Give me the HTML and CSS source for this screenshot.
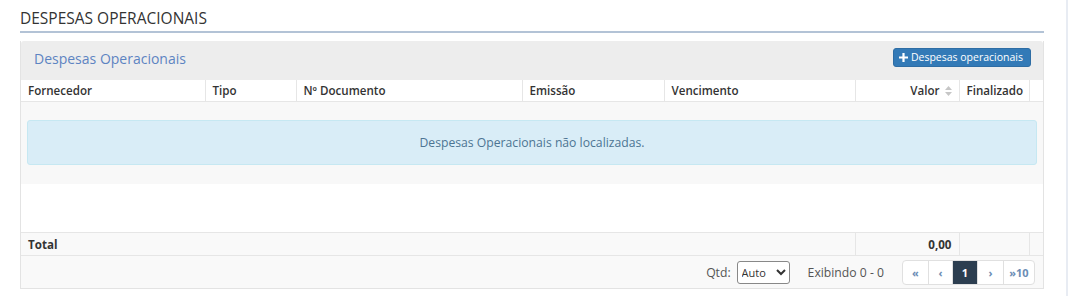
FILE: index.html
```html
<!DOCTYPE html>
<html lang="pt-BR">
<head>
    <meta charset="UTF-8">
    <meta name="viewport" content="width=device-width, initial-scale=1.0">
    <title>Despesas Operacionais</title>
    <link rel="stylesheet" href="styles.css">
</head>
<body>
    <div class="page">
        <h1 class="page-title">DESPESAS OPERACIONAIS</h1>

        <div class="panel">
            <div class="panel-heading">
                <span class="panel-title">Despesas Operacionais</span>
                <button class="btn-add" type="button">
                    <svg class="plus" width="9" height="9" viewBox="0 0 9 9"><path d="M3.4 0h2.2v3.4H9v2.2H5.6V9H3.4V5.6H0V3.4h3.4z" fill="#fff"/></svg>
                    Despesas operacionais
                </button>
            </div>

            <table class="grid">
                <colgroup>
                    <col style="width:184px">
                    <col style="width:91px">
                    <col style="width:226px">
                    <col style="width:142px">
                    <col style="width:191px">
                    <col style="width:104px">
                    <col style="width:70px">
                    <col style="width:14px">
                </colgroup>
                <thead>
                    <tr>
                        <th>Fornecedor</th>
                        <th>Tipo</th>
                        <th>Nº Documento</th>
                        <th>Emissão</th>
                        <th>Vencimento</th>
                        <th class="num">Valor <svg class="sort" width="7" height="10" viewBox="0 0 7 10"><path d="M3.5 0L7 4H0z M3.5 10L0 6h7z" fill="#c6c6c6"/></svg></th>
                        <th>Finalizado</th>
                        <th></th>
                    </tr>
                </thead>
            </table>

            <div class="grid-body">
                <div class="empty-area">
                    <div class="alert-info">Despesas Operacionais não localizadas.</div>
                </div>
            </div>

            <table class="grid grid-foot">
                <colgroup>
                    <col style="width:834px">
                    <col style="width:104px">
                    <col style="width:70px">
                    <col style="width:14px">
                </colgroup>
                <tr>
                    <td>Total</td>
                    <td class="num">0,00</td>
                    <td></td>
                    <td></td>
                </tr>
            </table>

            <div class="pager-bar">
                <label class="qtd">Qtd:
                    <select>
                        <option>Auto</option>
                    </select>
                </label>
                <span class="showing">Exibindo 0 - 0</span>
                <ul class="pagination">
                    <li class="w26">&laquo;</li>
                    <li class="w24">&lsaquo;</li>
                    <li class="active w25">1</li>
                    <li class="w26">&rsaquo;</li>
                    <li class="w31">&raquo;10</li>
                </ul>
            </div>
        </div>
    </div>
</body>
</html>
```

FILE: styles.css
```css
html, body {
    margin: 0;
    padding: 0;
    background-color: #fff;
}
body {
    font-family: "Open Sans", Arial, sans-serif;
    color: #333;
    height: 296px;
    overflow: hidden;
}
.page {
    width: 1024px;
    padding: 0 22px 0 20px;
    border-right: 2px solid #e8ecf3;
    height: 296px;
}
.page-title {
    margin: 0;
    padding: 8px 0 3px;
    font-size: 15.5px;
    font-weight: 400;
    line-height: 20px;
    color: #333;
    border-bottom: 2px solid #b3c3d6;
}
.panel {
    margin-top: 8px;
    border: 1px solid #e3e3e3;
    border-top: none;
    background-color: #fff;
}
.panel-heading {
    display: flex;
    justify-content: space-between;
    align-items: center;
    height: 39px;
    padding: 0 12px 0 13px;
    background-color: #ededed;
    border-radius: 3px 3px 0 0;
}
.panel-title {
    font-size: 14px;
    color: #5d84c2;
    margin-top: -4px;
}
.btn-add {
    display: flex;
    align-items: center;
    height: 19px;
    margin-top: -7px;
    padding: 0 7px 0 5px;
    border: 1px solid #2e6da4;
    border-radius: 3px;
    background-color: #337ab7;
    color: #fff;
    font-family: "Open Sans", Arial, sans-serif;
    font-size: 10.5px;
    cursor: pointer;
}
.plus {
    margin-right: 3px;
}
.grid {
    width: 100%;
    border-collapse: collapse;
    table-layout: fixed;
    font-size: 11.6px;
}
.grid th {
    height: 21px;
    padding: 0 7px;
    text-align: left;
    font-weight: 600;
    border-left: 1px solid #e6e6e6;
    border-bottom: 1px solid #e6e6e6;
    white-space: nowrap;
}
.grid th:first-child {
    border-left: none;
}
.num {
    text-align: right !important;
}
.sort {
    margin-left: 2px;
    vertical-align: -1px;
}
.grid-body {
    height: 130px;
    background-color: #fff;
}
.empty-area {
    background-color: #f8f8f8;
    padding: 18px 6px 19px 6px;
}
.alert-info {
    height: 43px;
    line-height: 43px;
    text-align: center;
    font-size: 12.2px;
    color: #4d7593;
    background-color: #d9edf7;
    border: 1px solid #c6e8f2;
    border-radius: 3px;
}
.grid-foot td {
    height: 22px;
    padding: 0 7px;
    font-weight: 700;
    background-color: #f9f9f9;
    border-top: 1px solid #e6e6e6;
    border-left: 1px solid #e6e6e6;
}
.grid-foot td:first-child {
    border-left: none;
}
.pager-bar {
    display: flex;
    justify-content: flex-end;
    align-items: center;
    height: 32px;
    padding-right: 8px;
    background-color: #f9f9f9;
    border-top: 1px solid #e6e6e6;
    font-size: 12.2px;
    color: #555;
}
.qtd {
    display: flex;
    align-items: center;
}
.qtd select {
    margin-left: 6px;
    width: 53px;
    height: 23px;
    font-family: "Open Sans", Arial, sans-serif;
    font-size: 11px;
    color: #333;
    border: 1px solid #888;
    border-radius: 3px;
    background-color: #fff;
}
.showing {
    margin-left: 18px;
}
.pagination {
    display: flex;
    list-style: none;
    margin: 0 0 0 18px;
    padding: 0;
    border: 1px solid #e0e0e0;
    border-radius: 4px;
    background-color: #fff;
}
.pagination li {
    height: 23px;
    line-height: 23px;
    text-align: center;
    font-size: 11px;
    font-weight: 700;
    color: #6b8db5;
    border-left: 1px solid #e0e0e0;
}
.pagination li:first-child {
    border-left: none;
}
.pagination li.active {
    background-color: #2c3e50;
    color: #fff;
}
.w24 { width: 23px; }
.w25 { width: 24px; }
.w26 { width: 25px; }
.w31 { width: 30px; }
```
